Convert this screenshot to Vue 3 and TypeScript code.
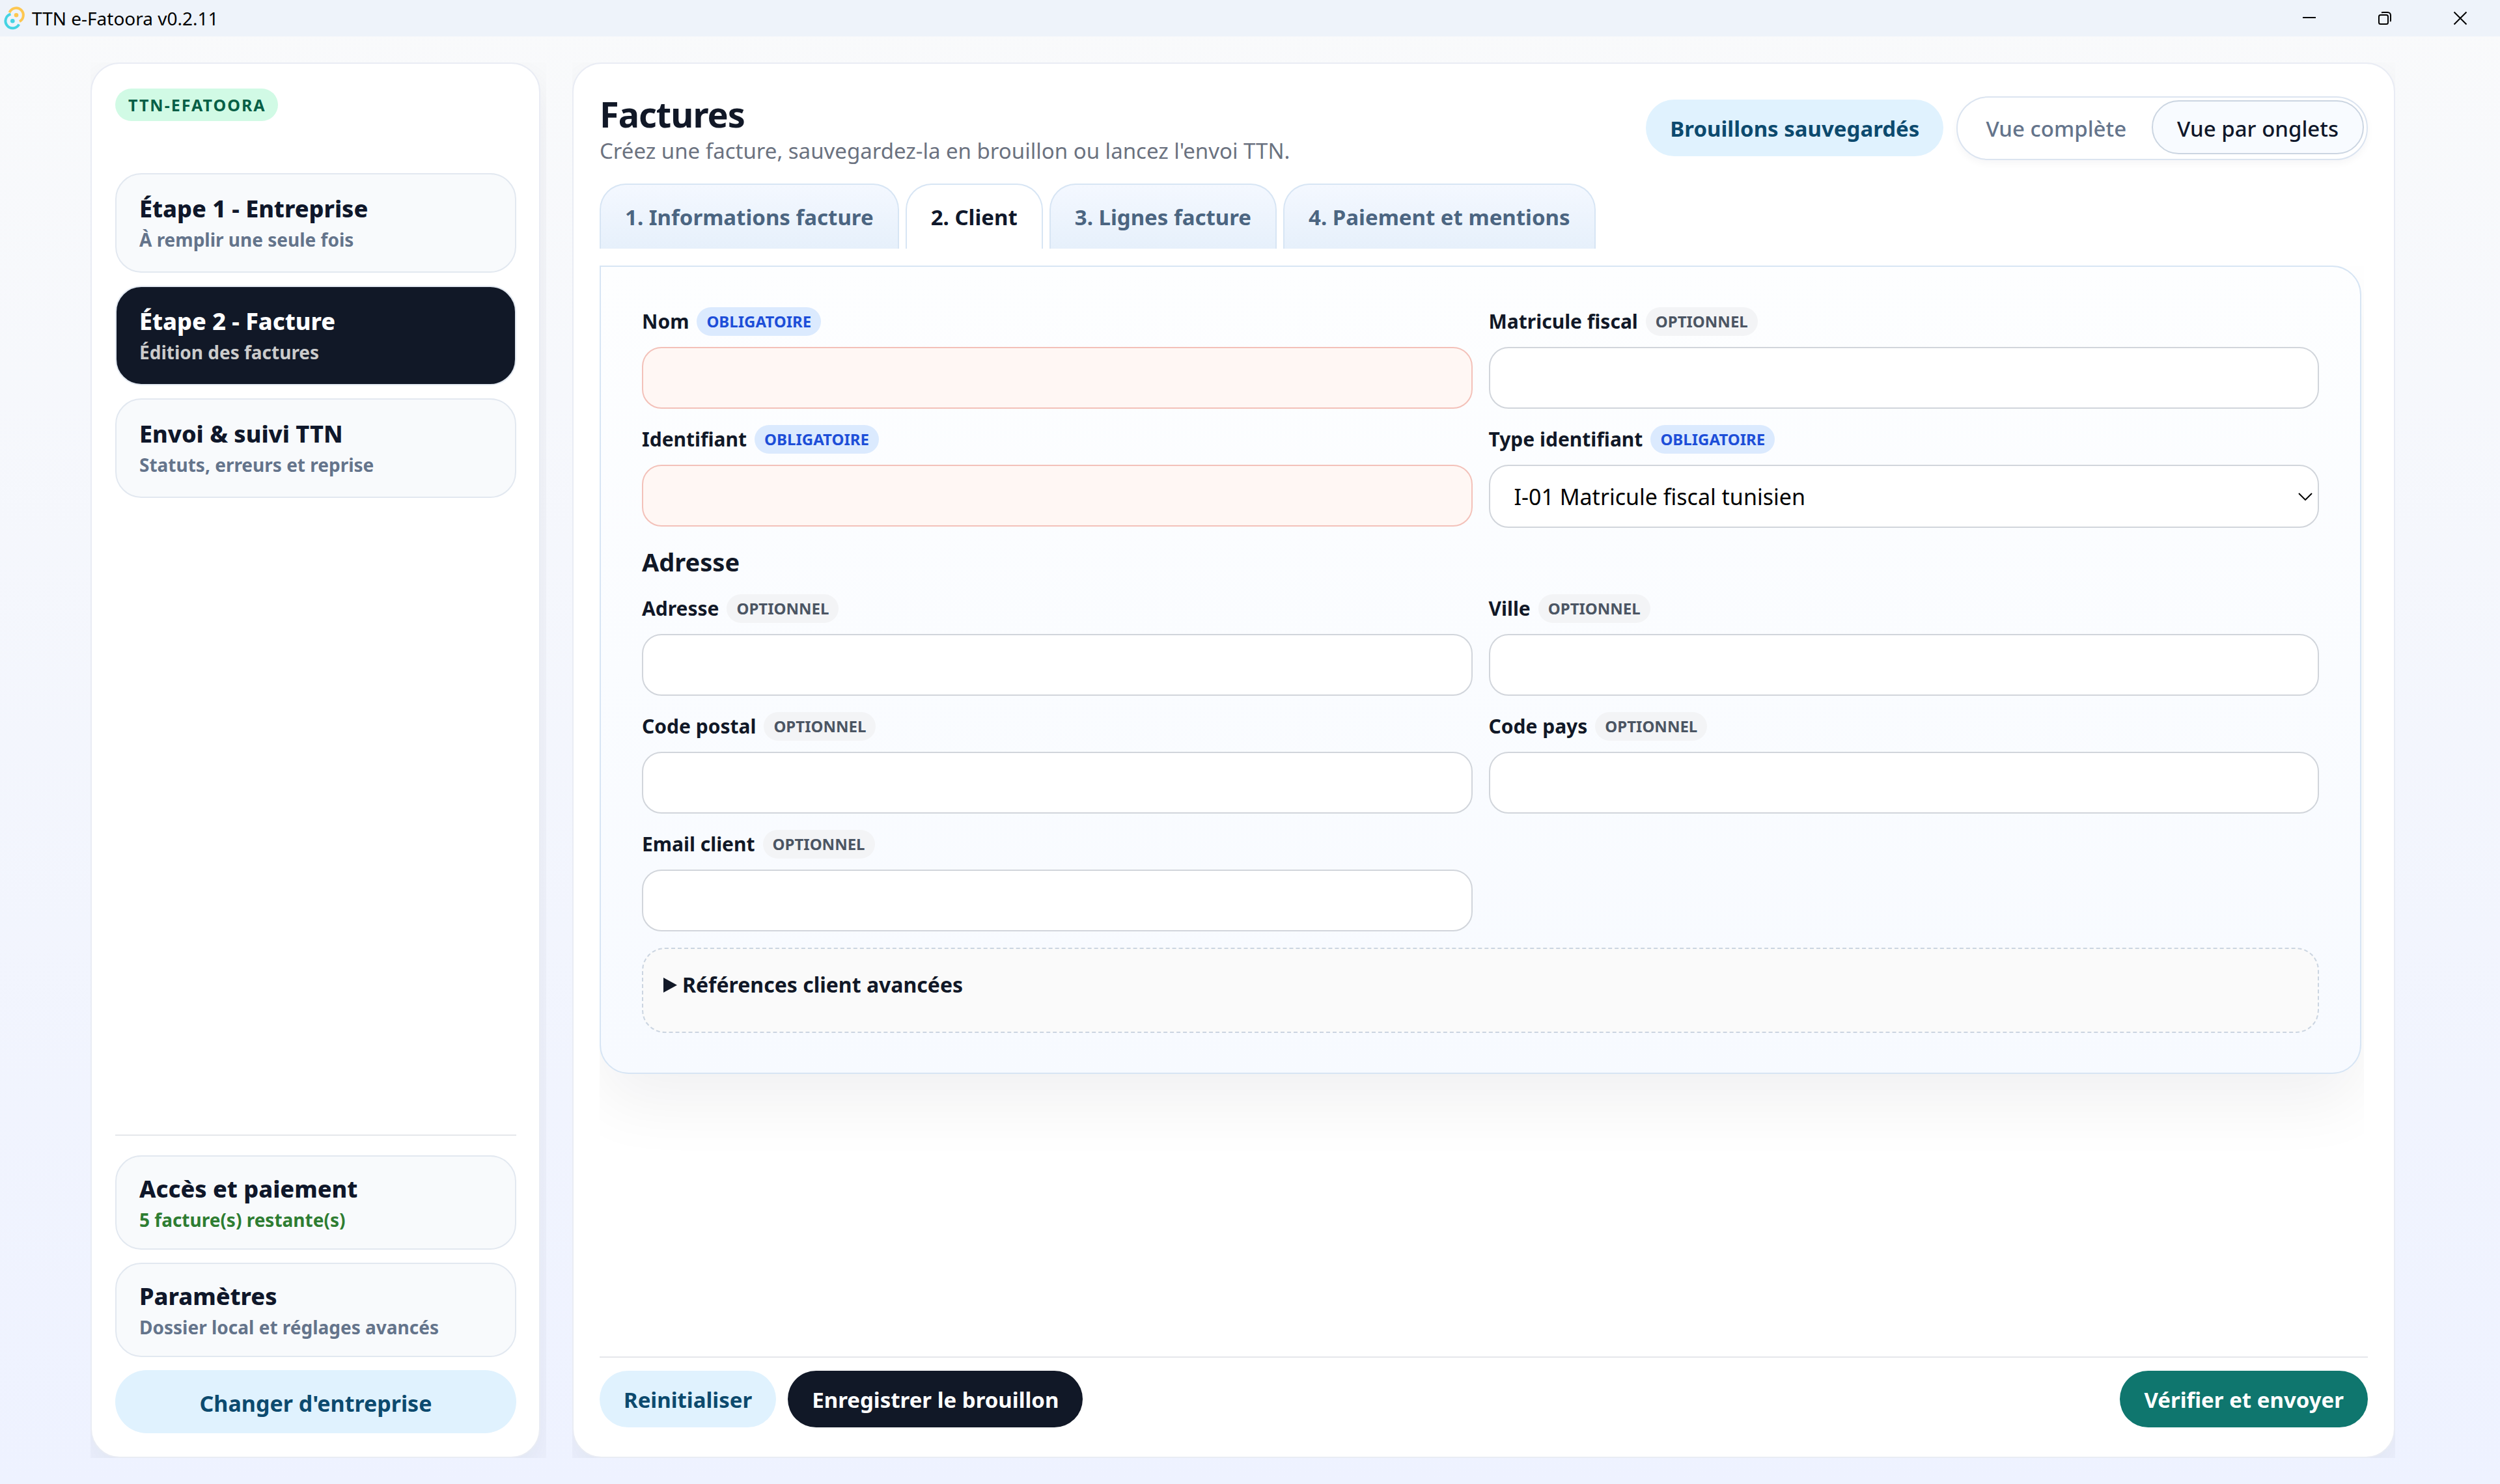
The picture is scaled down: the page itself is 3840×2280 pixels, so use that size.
<script setup lang="ts">
import { ref } from 'vue'

interface NavItem { id: string; title: string; hint: string; tone?: 'ok' }
interface Field { id: string; label: string; required?: boolean; options?: string[] }

const steps: NavItem[] = [
  { id: 'company', title: 'Étape 1 - Entreprise', hint: 'À remplir une seule fois' },
  { id: 'invoice', title: 'Étape 2 - Facture', hint: 'Édition des factures' },
  { id: 'tracking', title: 'Envoi & suivi TTN', hint: 'Statuts, erreurs et reprise' },
]
const extras: NavItem[] = [
  { id: 'access', title: 'Accès et paiement', hint: '5 facture(s) restante(s)', tone: 'ok' },
  { id: 'settings', title: 'Paramètres', hint: 'Dossier local et réglages avancés' },
]
const tabs: string[] = ['1. Informations facture', '2. Client', '3. Lignes facture', '4. Paiement et mentions']
const views: string[] = ['Vue complète', 'Vue par onglets']

const identity: Field[] = [
  { id: 'nom', label: 'Nom', required: true },
  { id: 'matricule', label: 'Matricule fiscal' },
  { id: 'identifiant', label: 'Identifiant', required: true },
  { id: 'type', label: 'Type identifiant', required: true, options: ['I-01 Matricule fiscal tunisien'] },
]
const address: Field[] = [
  { id: 'adresse', label: 'Adresse' },
  { id: 'ville', label: 'Ville' },
  { id: 'postal', label: 'Code postal' },
  { id: 'pays', label: 'Code pays' },
  { id: 'email', label: 'Email client' },
]
const groups = [
  { id: 'identity', heading: '', fields: identity },
  { id: 'address', heading: 'Adresse', fields: address },
]

const activeStep = ref('invoice')
const activeTab = ref(1)
const activeView = ref(1)
const values = ref<Record<string, string>>({ type: 'I-01 Matricule fiscal tunisien' })
</script>

<template>
  <div class="window">
    <header class="titlebar">
      <svg class="logo" viewBox="0 0 42 56" fill="none" aria-hidden="true">
        <path d="M14.6 19.2A11 11 0 1 1 30 33" stroke="#fdc750" stroke-width="4" />
        <circle cx="25" cy="23.3" r="3.3" fill="#fdc750" />
        <path d="M16.4 21.7A11 11 0 1 0 29.2 37.4" stroke="#45d3e3" stroke-width="4" />
        <circle cx="19.3" cy="32.3" r="3.3" fill="#45d3e3" />
      </svg>
      <span class="app-name">TTN e-Fatoora v0.2.11</span>
      <div class="win-actions">
        <button type="button" aria-label="Réduire">
          <svg viewBox="0 0 20 20"><path d="M0 9h20" /></svg>
        </button>
        <button type="button" aria-label="Restaurer">
          <svg viewBox="0 0 20 20"><rect x="1" y="5" width="14" height="14" rx="2.5" /><path d="M5 1.6C5.6 1.2 6 1 7 1h7.5A4.5 4.5 0 0 1 19 5.5V13c0 1-.2 1.5-.7 2" /></svg>
        </button>
        <button type="button" aria-label="Fermer">
          <svg viewBox="0 0 20 20"><path d="M.5.5l19 19M19.5.5l-19 19" /></svg>
        </button>
      </div>
    </header>

    <div class="workspace">
      <div class="side-wrap">
        <aside class="panel sidebar">
          <span class="brand">TTN-EFATOORA</span>
          <nav class="steps">
            <button
              v-for="s in steps" :key="s.id" type="button" class="nav-item"
              :class="{ active: activeStep === s.id }" @click="activeStep = s.id"
            >
              <span class="nav-title">{{ s.title }}</span>
              <span class="nav-hint">{{ s.hint }}</span>
            </button>
          </nav>
          <div class="side-foot">
            <button v-for="e in extras" :key="e.id" type="button" class="nav-item compact">
              <span class="nav-title">{{ e.title }}</span>
              <span class="nav-hint" :class="e.tone">{{ e.hint }}</span>
            </button>
            <button type="button" class="switch">Changer d'entreprise</button>
          </div>
        </aside>
      </div>

      <div class="main-wrap">
        <main class="panel main">
          <div class="head">
            <div>
              <h1>Factures</h1>
              <p class="lead">Créez une facture, sauvegardez-la en brouillon ou lancez l'envoi TTN.</p>
            </div>
            <div class="head-actions">
              <button type="button" class="btn soft">Brouillons sauvegardés</button>
              <div class="toggle">
                <button
                  v-for="(v, i) in views" :key="v" type="button"
                  :class="{ on: activeView === i }" @click="activeView = i"
                >{{ v }}</button>
              </div>
            </div>
          </div>

          <div class="tabs" role="tablist">
            <button
              v-for="(t, i) in tabs" :key="t" type="button" role="tab" class="tab"
              :aria-selected="activeTab === i" :class="{ on: activeTab === i }" @click="activeTab = i"
            >{{ t }}</button>
          </div>

          <div class="scroll">
            <form class="sheet" @submit.prevent>
              <template v-for="g in groups" :key="g.id">
                <h2 v-if="g.heading">{{ g.heading }}</h2>
                <div class="grid">
                  <div v-for="f in g.fields" :key="f.id" class="field">
                    <label :for="f.id">
                      <span>{{ f.label }}</span>
                      <span class="pill" :class="{ must: f.required }">{{ f.required ? 'OBLIGATOIRE' : 'OPTIONNEL' }}</span>
                    </label>
                    <div v-if="f.options" class="select">
                      <select :id="f.id" v-model="values[f.id]">
                        <option v-for="o in f.options" :key="o">{{ o }}</option>
                      </select>
                      <svg viewBox="0 0 22 12" aria-hidden="true"><path d="M1 1l10 10L21 1" /></svg>
                    </div>
                    <input v-else :id="f.id" v-model="values[f.id]" type="text" :class="{ missing: f.required && !values[f.id] }">
                  </div>
                </div>
              </template>
              <details class="advanced">
                <summary>
                  <svg viewBox="0 0 21 23" aria-hidden="true"><path d="M0 0l21 11.5L0 23z" /></svg>
                  <span>Références client avancées</span>
                </summary>
              </details>
            </form>
          </div>

          <footer class="actions">
            <button type="button" class="btn soft">Reinitialiser</button>
            <button type="button" class="btn dark">Enregistrer le brouillon</button>
            <button type="button" class="btn send">Vérifier et envoyer</button>
          </footer>
        </main>
      </div>
    </div>
  </div>
</template>

<style>
body { margin: 0; background: #eef2ff; }
</style>

<style scoped>
* { box-sizing: border-box; }

.window {
  min-height: 100vh;
  display: flex;
  flex-direction: column;
  background: linear-gradient(180deg, #f9fafb, #eef2ff);
  color: #111827;
  font-family: "Noto Sans", "Open Sans", sans-serif;
}

button { font: inherit; color: inherit; margin: 0; padding: 0; border: 0; background: none; cursor: pointer; }
h1, h2, p { margin: 0; }

/* title bar */
.titlebar {
  display: flex;
  align-items: center;
  gap: 7px;
  height: 56px;
  padding-right: 3px;
  background: #eef3fa;
}
.logo { width: 42px; height: 56px; }
.app-name { font-size: 28px; line-height: 56px; color: #000; }
.win-actions { display: flex; margin-left: auto; }
.win-actions button { display: flex; align-items: center; justify-content: center; width: 116px; height: 56px; }
.win-actions svg { width: 20px; height: 20px; fill: none; stroke: #000; stroke-width: 2; overflow: visible; }

/* page columns */
.workspace { flex: 1; display: flex; gap: 40px; padding: 40px 161px 40px 139px; }
.side-wrap { flex: none; width: 700px; padding-right: 9px; display: flex; overflow: hidden; }
.main-wrap { flex: 1; min-width: 0; display: flex; overflow: hidden; }
.panel {
  flex: 1;
  min-width: 0;
  display: flex;
  flex-direction: column;
  background: #fff;
  border: 2px solid #e9ecf4;
  border-radius: 45px;
  box-shadow: 0 25px 62px rgba(15, 23, 42, 0.07);
}

/* sidebar */
.sidebar { padding: 38px 35px 36px 36px; }
.brand {
  align-self: flex-start;
  padding: 0 18px 0 20px;
  border-radius: 25px;
  background: #d1fae5;
  color: #065f46;
  font-size: 25px;
  font-weight: 700;
  line-height: 50px;
  letter-spacing: 2px;
}
.steps { display: flex; flex-direction: column; gap: 20px; margin-top: 80px; }
.nav-item {
  display: flex;
  flex-direction: column;
  padding: 27px 35px 28px;
  border: 2px solid #e2e8f0;
  border-radius: 40px;
  background: #f8fafc;
  text-align: left;
}
.nav-item.compact { padding: 24px 35px 23px; }
.nav-title { font-size: 36px; font-weight: 800; line-height: 52px; color: #0f172a; }
.nav-hint { font-size: 28px; font-weight: 700; line-height: 42px; color: #64748b; }
.nav-hint.ok { color: #2e7d32; }
.nav-item.active { background: #111827; }
.active .nav-title { color: #fff; }
.active .nav-hint { color: #cbcbcb; }
.side-foot {
  display: flex;
  flex-direction: column;
  gap: 20px;
  margin-top: auto;
  padding-top: 30px;
  border-top: 2px solid #e5e7eb;
}
.switch {
  padding: 27px 35px 22px;
  border-radius: 50px;
  background: #e0f2fe;
  color: #0c4a6e;
  font-size: 34px;
  font-weight: 700;
  line-height: 48px;
}

/* main panel */
.main { padding: 42px 40px 45px; }
.head { display: flex; justify-content: space-between; align-items: center; }
h1 { font-size: 54px; font-weight: 700; line-height: 70px; letter-spacing: -1px; }
.lead { font-size: 33px; line-height: 44px; color: #6b7280; }
.head-actions { display: flex; align-items: baseline; gap: 20px; }

.btn {
  padding: 21px 37px 18px;
  border-radius: 44px;
  font-size: 33px;
  font-weight: 700;
  line-height: 48px;
  white-space: nowrap;
}
.soft { background: #e0f2fe; color: #0c4a6e; }
.dark { background: #111827; color: #fff; }
.send { margin-left: auto; background: #0f766e; color: #fff; }

.toggle {
  display: flex;
  padding: 4px 4px 7px;
  border: 2px solid #dbe4f0;
  border-radius: 50px;
  background: #fff;
  box-shadow: 0 5px 12px rgba(15, 23, 42, 0.04);
}
.toggle button {
  padding: 18px 37px 13px;
  border: 2px solid transparent;
  border-radius: 42px;
  font-size: 33px;
  font-weight: 500;
  line-height: 48px;
  color: #64748b;
  white-space: nowrap;
}
.toggle .on { border-color: #cbd5e1; background: #f8fbff; color: #0f172a; }

.tabs { display: flex; gap: 10px; margin-top: 28px; }
.tab {
  padding: 26px 37px 24px;
  border: 2px solid #d7e5f4;
  border-bottom: 0;
  border-radius: 40px 40px 0 0;
  background: linear-gradient(180deg, #f4f8ff, #e6f0fb);
  color: #4b6581;
  font-size: 33px;
  font-weight: 700;
  line-height: 48px;
  white-space: nowrap;
}
.tab.on { background: #fff; color: #0f172a; }

.scroll { flex: 1; overflow: hidden; margin: 26px 6px 0 0; padding-right: 4px; }
.sheet {
  display: flex;
  flex-direction: column;
  gap: 25px;
  padding: 62px 63px 61px;
  border: 2px solid #d7e5f4;
  border-radius: 0 45px 45px 45px;
  background: linear-gradient(180deg, #fdfeff, #f7faff);
  box-shadow: 0 45px 100px rgba(15, 23, 42, 0.06);
}
.grid { display: grid; grid-template-columns: 1fr 1fr; gap: 25px; }
h2 { padding-top: 2px; font-size: 38px; font-weight: 700; line-height: 50px; }

.field label {
  display: flex;
  align-items: center;
  gap: 12px;
  margin-bottom: 17px;
  font-size: 30px;
  font-weight: 700;
  line-height: 44px;
}
.pill {
  padding: 0 15px;
  border-radius: 22px;
  background: #f3f4f6;
  color: #4b5563;
  font-size: 24px;
}
.pill.must { background: #dbeafe; color: #1d4ed8; }
.field input, .field select {
  display: block;
  width: 100%;
  height: 95px;
  margin: 0;
  padding: 0 37px;
  border: 2px solid #d1d5db;
  border-radius: 30px;
  background: #fff;
  color: #000;
  font: 400 34px "Noto Sans", "Open Sans", sans-serif;
}
.field input.missing { border-color: #f3c1b9; background: #fff7f4; }
.select { position: relative; }
.field select { height: 97px; appearance: none; }
.select svg {
  position: absolute;
  top: 43px;
  right: 10px;
  width: 22px;
  height: 12px;
  fill: none;
  stroke: #000;
  stroke-width: 2;
  pointer-events: none;
}

.advanced {
  padding: 31px 31px 48px;
  border: 2px dashed #cbd5e1;
  border-radius: 35px;
  background: #fafafa;
}
.advanced summary {
  display: flex;
  align-items: center;
  gap: 8px;
  font-size: 32px;
  font-weight: 700;
  line-height: 48px;
  list-style: none;
  cursor: pointer;
}
.advanced svg { width: 21px; height: 23px; fill: #111827; }

.actions {
  display: flex;
  gap: 18px;
  padding-top: 20px;
  border-top: 2px solid #e5e7eb;
}
</style>
